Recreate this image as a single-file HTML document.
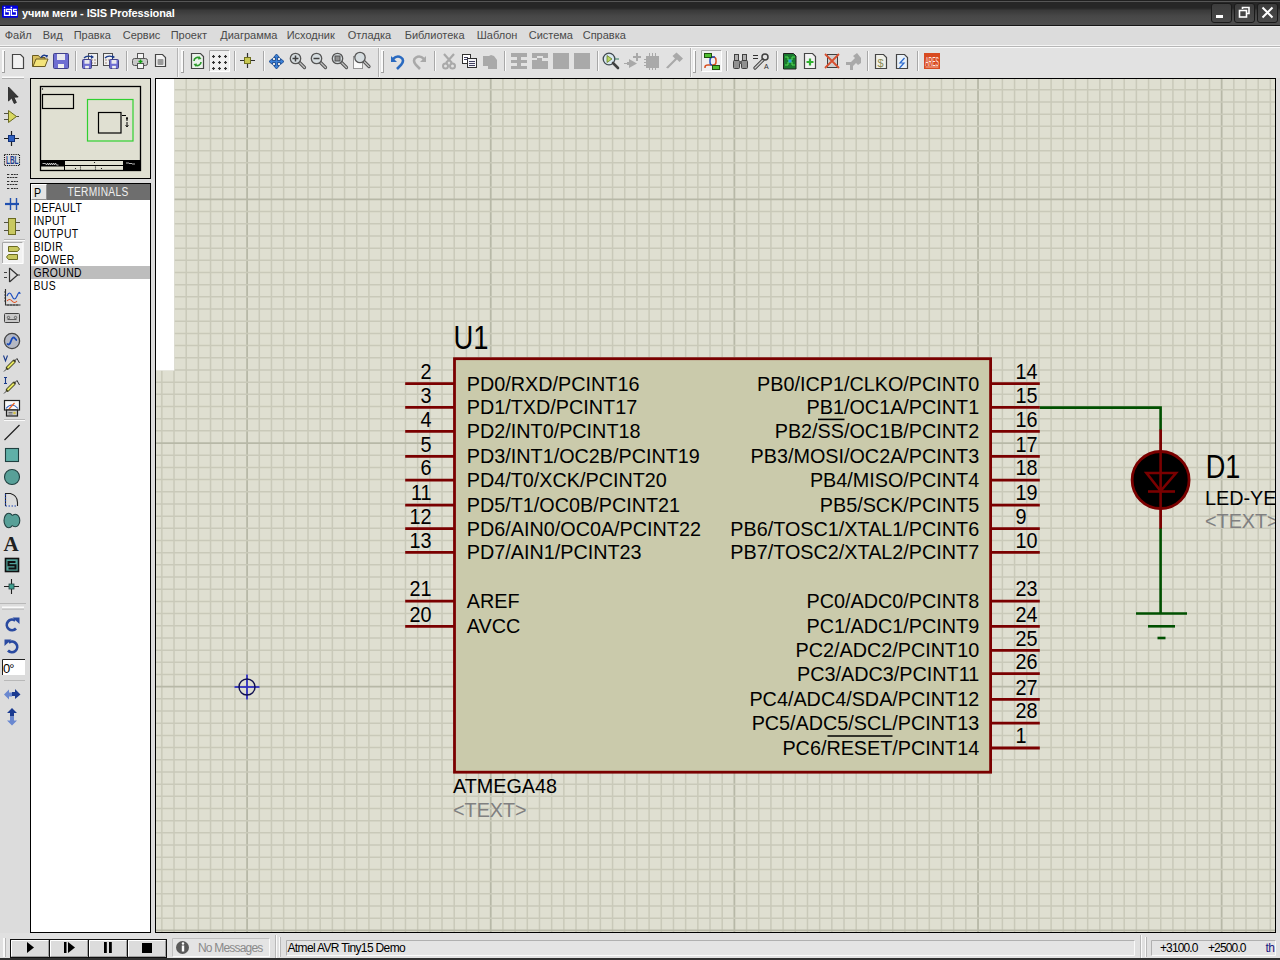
<!DOCTYPE html><html><head><meta charset="utf-8"><style>
*{margin:0;padding:0;box-sizing:border-box}
html,body{width:1280px;height:960px;overflow:hidden;background:#dcdcdc;font-family:"Liberation Sans",sans-serif}
.a{position:absolute}
svg{position:absolute;overflow:visible}
</style></head><body>

<div class="a" style="left:0;top:0;width:1280px;height:26px;background:linear-gradient(#202020 0px,#202020 1px,#262626 2px,#262626 8px,#3a3a3a 10.5px,#474747 16px,#4e4e4e 24px)"></div>
<div class="a" style="left:0;top:1px;width:1280px;height:1px;background:#565656"></div>
<div class="a" style="left:0;top:25px;width:1280px;height:1px;background:#151515"></div>
<svg style="left:0;top:0" width="20" height="22"><rect x="2" y="5.5" width="16" height="12.3" rx="1" fill="#0000e0"/><path d="M4.5 9V15.3H9.5V11.5H6.3V9.3H11.4V15.3H16.5V11.5H13.5V9.3H16.8" fill="none" stroke="#fff" stroke-width="1.3"/><rect x="3.8" y="6.8" width="1.4" height="1.4" fill="#fff"/><rect x="10.7" y="6.8" width="1.4" height="1.4" fill="#fff"/></svg>
<div class="a" style="left:22px;top:6px;height:14px;color:#fff;font:bold 11px/14px 'Liberation Sans',sans-serif;white-space:pre;letter-spacing:-0.1px">учим меги - ISIS Professional</div>
<div class="a" style="left:1211px;top:3px;width:21px;height:20px;border:1px solid #1a1a1a;border-radius:3px;background:linear-gradient(#3c3c3c,#4a4a4a)"></div>
<div class="a" style="left:1234px;top:3px;width:21px;height:20px;border:1px solid #1a1a1a;border-radius:3px;background:linear-gradient(#3c3c3c,#4a4a4a)"></div>
<div class="a" style="left:1257px;top:3px;width:21px;height:20px;border:1px solid #1a1a1a;border-radius:3px;background:linear-gradient(#3c3c3c,#4a4a4a)"></div>
<div class="a" style="left:1216px;top:15px;width:7px;height:3px;background:#fff"></div>
<svg style="left:1234px;top:0" width="22" height="26"><path d="M8.5 9V7.5H15V13.5H13" fill="none" stroke="#fff" stroke-width="1.6"/><rect x="5.5" y="10.5" width="7" height="6.5" fill="#444" stroke="#fff" stroke-width="1.6"/></svg>
<svg style="left:1257.5px;top:0" width="22" height="26"><path d="M4.5 7.5L14.5 17.5M14.5 7.5L4.5 17.5" stroke="#fff" stroke-width="2"/></svg>
<div class="a" style="left:0;top:26px;width:1280px;height:20px;background:#dcdcdc"></div>
<div class="a" style="left:0;top:26px;width:1280px;height:1px;background:#e6e6e6"></div>
<div class="a" style="left:0;top:45px;width:1280px;height:1px;background:#f4f4f4"></div>
<div class="a" style="left:0;top:46px;width:1280px;height:1px;background:#b6b6b6"></div>
<div class="a" style="left:0;top:47px;width:1280px;height:1px;background:#fafafa"></div>
<div class="a" style="left:4.7px;top:27.4px;height:16px;color:#4a4a4a;font:11px/16px 'Liberation Sans',sans-serif;white-space:pre">Файл</div>
<div class="a" style="left:42.7px;top:27.4px;height:16px;color:#4a4a4a;font:11px/16px 'Liberation Sans',sans-serif;white-space:pre">Вид</div>
<div class="a" style="left:73.7px;top:27.4px;height:16px;color:#4a4a4a;font:11px/16px 'Liberation Sans',sans-serif;white-space:pre">Правка</div>
<div class="a" style="left:122.7px;top:27.4px;height:16px;color:#4a4a4a;font:11px/16px 'Liberation Sans',sans-serif;white-space:pre">Сервис</div>
<div class="a" style="left:170.7px;top:27.4px;height:16px;color:#4a4a4a;font:11px/16px 'Liberation Sans',sans-serif;white-space:pre">Проект</div>
<div class="a" style="left:220.2px;top:27.4px;height:16px;color:#4a4a4a;font:11px/16px 'Liberation Sans',sans-serif;white-space:pre">Диаграмма</div>
<div class="a" style="left:286.7px;top:27.4px;height:16px;color:#4a4a4a;font:11px/16px 'Liberation Sans',sans-serif;white-space:pre">Исходник</div>
<div class="a" style="left:347.7px;top:27.4px;height:16px;color:#4a4a4a;font:11px/16px 'Liberation Sans',sans-serif;white-space:pre">Отладка</div>
<div class="a" style="left:404.7px;top:27.4px;height:16px;color:#4a4a4a;font:11px/16px 'Liberation Sans',sans-serif;white-space:pre">Библиотека</div>
<div class="a" style="left:476.7px;top:27.4px;height:16px;color:#4a4a4a;font:11px/16px 'Liberation Sans',sans-serif;white-space:pre">Шаблон</div>
<div class="a" style="left:528.7px;top:27.4px;height:16px;color:#4a4a4a;font:11px/16px 'Liberation Sans',sans-serif;white-space:pre">Система</div>
<div class="a" style="left:582.7px;top:27.4px;height:16px;color:#4a4a4a;font:11px/16px 'Liberation Sans',sans-serif;white-space:pre">Справка</div>
<div class="a" style="left:0;top:48px;width:1280px;height:30px;background:#e2e2e2"></div>
<svg style="left:0;top:0" width="1280" height="80"><rect x="2" y="50" width="3" height="23" fill="#fafafa"/><line x1="4.5" y1="51" x2="4.5" y2="73" stroke="#a0a0a0"/><line x1="2" y1="72.5" x2="5" y2="72.5" stroke="#a0a0a0"/><path d="M12.5 54.5H20.5L23.5 57.5V68.5H12.5Z" fill="#f2f2f2" stroke="#454545" stroke-width="1.2"/><path d="M32.5 55.5h6l1.5 2h5v9h-12.5z" fill="#d8c060" stroke="#6a5a20"/><path d="M33 66.5l3-7.5h12l-3 7.5z" fill="#f4e47a" stroke="#6a5a20"/><path d="M41 57.5q3-4 6-1" fill="none" stroke="#1a3a8a" stroke-width="1.5"/><path d="M45 55l3 0l-1 3z" fill="#1a3a8a"/><rect x="53.5" y="53.5" width="15" height="15" rx="1" fill="#6e6ed2" stroke="#40408a"/><rect x="57.0" y="54" width="8.0" height="6.0" fill="#e8e8ee"/><rect x="58.0" y="64.0" width="6.0" height="4.0" fill="#f0f0f0"/><line x1="75.5" y1="51" x2="75.5" y2="71" stroke="#a8a8a8" stroke-width="1"/><line x1="76.5" y1="51" x2="76.5" y2="71" stroke="#fafafa" stroke-width="1"/><rect x="88.5" y="53.5" width="9" height="12" fill="#eee" stroke="#505050"/><circle cx="92" cy="60" r=".8" fill="#a08070"/><circle cx="95" cy="60" r=".8" fill="#a08070"/><circle cx="92" cy="63" r=".8" fill="#a08070"/><circle cx="95" cy="63" r=".8" fill="#a08070"/><rect x="82.5" y="59.5" width="9" height="9" rx="1" fill="#6e6ed2" stroke="#40408a"/><rect x="84.5" y="60" width="5.0" height="3.75" fill="#e8e8ee"/><rect x="85.125" y="65.875" width="3.75" height="2.5" fill="#f0f0f0"/><path d="M84 58q3-3 8-1" fill="none" stroke="#1a3a8a" stroke-width="1.3"/><path d="M91 55l3 2l-3 2z" fill="#1a3a8a"/><rect x="103.5" y="53.5" width="9" height="12" fill="#eee" stroke="#505050"/><circle cx="106" cy="60" r=".8" fill="#a08070"/><circle cx="109" cy="60" r=".8" fill="#a08070"/><circle cx="106" cy="63" r=".8" fill="#a08070"/><rect x="109.5" y="59.5" width="9" height="9" rx="1" fill="#6e6ed2" stroke="#40408a"/><rect x="111.5" y="60" width="5.0" height="3.75" fill="#e8e8ee"/><rect x="112.125" y="65.875" width="3.75" height="2.5" fill="#f0f0f0"/><path d="M105 58q3-3 8-1" fill="none" stroke="#1a3a8a" stroke-width="1.3"/><path d="M112 55l3 2l-3 2z" fill="#1a3a8a"/><line x1="126.5" y1="51" x2="126.5" y2="71" stroke="#a8a8a8" stroke-width="1"/><line x1="127.5" y1="51" x2="127.5" y2="71" stroke="#fafafa" stroke-width="1"/><rect x="137.5" y="53.5" width="6" height="5" fill="#f4f4f4" stroke="#555"/><rect x="132.5" y="58.5" width="15" height="7" rx="2" fill="#c8c8c8" stroke="#555"/><rect x="137.5" y="63.5" width="6" height="5" fill="#f4f4f4" stroke="#555"/><path d="M140.5 59.5v4M138.5 61.5h4" stroke="#10a010" stroke-width="1.5"/><path d="M155.5 54.5H162.5L165.5 57.5V66.5H155.5Z" fill="#f2f2f2" stroke="#454545" stroke-width="1.2"/><rect x="157.5" y="59" width="6" height="6" rx="1" fill="#9a9a9a"/><line x1="177.5" y1="48" x2="177.5" y2="77" stroke="#b4b4b4"/><line x1="178.5" y1="48" x2="178.5" y2="77" stroke="#f4f4f4"/><rect x="181" y="50" width="3" height="23" fill="#fafafa"/><line x1="183.5" y1="51" x2="183.5" y2="73" stroke="#a0a0a0"/><line x1="181" y1="72.5" x2="184" y2="72.5" stroke="#a0a0a0"/><path d="M191.5 53.5H200.5L203.5 56.5V68.5H191.5Z" fill="#eaf2ea" stroke="#454545" stroke-width="1.2"/><path d="M194 61a3.5 3.5 0 0 1 6-2.5M201 62a3.5 3.5 0 0 1-6 2.5" fill="none" stroke="#2a9a2a" stroke-width="1.6"/><path d="M199 56l2.5 3-3.5.5z M196 67l-2.5-3 3.5-.5z" fill="#2a9a2a"/><rect x="209" y="50" width="21" height="22" fill="#f0f0f0"/><path d="M209.5 71.5V50.5H229.5" fill="none" stroke="#a8a8a8"/><path d="M229.5 50.5V71.5H209.5" fill="none" stroke="#ffffff"/><path d="M212.0 56.5h3M213.5 55.0v3" stroke="#303030" stroke-width="1.2"/><path d="M212.0 62.5h3M213.5 61.0v3" stroke="#303030" stroke-width="1.2"/><path d="M212.0 68.5h3M213.5 67.0v3" stroke="#303030" stroke-width="1.2"/><path d="M218.0 56.5h3M219.5 55.0v3" stroke="#303030" stroke-width="1.2"/><path d="M218.0 62.5h3M219.5 61.0v3" stroke="#303030" stroke-width="1.2"/><path d="M218.0 68.5h3M219.5 67.0v3" stroke="#303030" stroke-width="1.2"/><path d="M224.0 56.5h3M225.5 55.0v3" stroke="#303030" stroke-width="1.2"/><path d="M224.0 62.5h3M225.5 61.0v3" stroke="#303030" stroke-width="1.2"/><path d="M224.0 68.5h3M225.5 67.0v3" stroke="#303030" stroke-width="1.2"/><line x1="234.5" y1="51" x2="234.5" y2="71" stroke="#a8a8a8" stroke-width="1"/><line x1="235.5" y1="51" x2="235.5" y2="71" stroke="#fafafa" stroke-width="1"/><path d="M240 60.5h15M247.5 53v15" stroke="#303030" stroke-width="1.2"/><rect x="244.5" y="57.5" width="6" height="6" fill="#c8c850" stroke="#707020"/><line x1="263.5" y1="51" x2="263.5" y2="71" stroke="#a8a8a8" stroke-width="1"/><line x1="264.5" y1="51" x2="264.5" y2="71" stroke="#fafafa" stroke-width="1"/><path d="M276.5 54l3 3.5h-2v3h3v-2l3.5 3-3.5 3v-2h-3v3h2l-3 3.5-3-3.5h2v-3h-3v2l-3.5-3 3.5-3v2h3v-3h-2z" fill="#3a80d8" stroke="#1a4a90" stroke-width=".9"/><line x1="298.5" y1="61.5" x2="304.5" y2="67.5" stroke="#505050" stroke-width="3.2" stroke-linecap="round"/><line x1="298.5" y1="61.5" x2="304.5" y2="67.5" stroke="#c0c0c0" stroke-width="1.4" stroke-linecap="round"/><circle cx="295.5" cy="58.5" r="5.2" fill="#d6dde0" stroke="#555" stroke-width="1.3"/><path d="M292.5 58.5h6M295.5 55.5v6" stroke="#404040" stroke-width="1.5"/><line x1="319.5" y1="61.5" x2="325.5" y2="67.5" stroke="#505050" stroke-width="3.2" stroke-linecap="round"/><line x1="319.5" y1="61.5" x2="325.5" y2="67.5" stroke="#c0c0c0" stroke-width="1.4" stroke-linecap="round"/><circle cx="316.5" cy="58.5" r="5.2" fill="#d6dde0" stroke="#555" stroke-width="1.3"/><path d="M313.5 58.5h6" stroke="#404040" stroke-width="1.5"/><line x1="340.5" y1="61.5" x2="346.5" y2="67.5" stroke="#505050" stroke-width="3.2" stroke-linecap="round"/><line x1="340.5" y1="61.5" x2="346.5" y2="67.5" stroke="#c0c0c0" stroke-width="1.4" stroke-linecap="round"/><circle cx="337.5" cy="58.5" r="5.2" fill="#d6dde0" stroke="#555" stroke-width="1.3"/><rect x="335" y="56" width="5" height="5" fill="#909090" stroke="#505050"/><rect x="353.5" y="56.5" width="9" height="12" fill="#fafafa" stroke="#404040" stroke-dasharray="1 1"/><line x1="363" y1="60.5" x2="369" y2="66.5" stroke="#505050" stroke-width="3.2" stroke-linecap="round"/><line x1="363" y1="60.5" x2="369" y2="66.5" stroke="#c0c0c0" stroke-width="1.4" stroke-linecap="round"/><circle cx="360" cy="57.5" r="5.2" fill="#d6dde0" stroke="#555" stroke-width="1.3"/><line x1="378.5" y1="48" x2="378.5" y2="77" stroke="#b4b4b4"/><line x1="379.5" y1="48" x2="379.5" y2="77" stroke="#f4f4f4"/><rect x="381" y="50" width="3" height="23" fill="#fafafa"/><line x1="383.5" y1="51" x2="383.5" y2="73" stroke="#a0a0a0"/><line x1="381" y1="72.5" x2="384" y2="72.5" stroke="#a0a0a0"/><path d="M393 59q4-4 8-1.5t0 7.5l-4 4" fill="none" stroke="#2a6ac0" stroke-width="2.6"/><path d="M391 56v6h6z" fill="#2a6ac0"/><path d="M424 59q-4-4-8-1.5t0 7.5l4 4" fill="none" stroke="#a9a9a9" stroke-width="2.6"/><path d="M426 56v6h-6z" fill="#a9a9a9"/><line x1="434.5" y1="51" x2="434.5" y2="71" stroke="#a8a8a8" stroke-width="1"/><line x1="435.5" y1="51" x2="435.5" y2="71" stroke="#fafafa" stroke-width="1"/><path d="M444 54l8 9M454 54l-8 9" stroke="#a9a9a9" stroke-width="2.2"/><circle cx="445.5" cy="66" r="2.5" fill="none" stroke="#a9a9a9" stroke-width="2"/><circle cx="452.5" cy="66" r="2.5" fill="none" stroke="#a9a9a9" stroke-width="2"/><rect x="462.5" y="54.5" width="8" height="9" fill="#fff" stroke="#303030"/><rect x="467.5" y="58.5" width="9" height="9" fill="#f4f4f8" stroke="#303030"/><path d="M464 57.5h4M464 59.5h4M469 61.5h6M469 63.5h6M469 65.5h6" stroke="#404060" stroke-width="1"/><path d="M483 56h6l2-1 3 1 3 4v9h-9v-3h-5z" fill="#a9a9a9"/><line x1="504.5" y1="51" x2="504.5" y2="71" stroke="#a8a8a8" stroke-width="1"/><line x1="505.5" y1="51" x2="505.5" y2="71" stroke="#fafafa" stroke-width="1"/><path d="M511 53h16v4h-6v3h6v3h-6v3h6v3h-16v-3h6v-3h-6v-3h6v-3h-6z" fill="#a9a9a9"/><path d="M532 53h16v5h-5v-2h-6v2h5v3h-5v2h-5v-3h5v-2h-5z M532 61h16v8h-16z" fill="#a9a9a9"/><rect x="553" y="53" width="16" height="16" fill="#a9a9a9"/><rect x="574" y="53" width="16" height="16" fill="#a9a9a9"/><line x1="597.5" y1="51" x2="597.5" y2="71" stroke="#a8a8a8" stroke-width="1"/><line x1="598.5" y1="51" x2="598.5" y2="71" stroke="#fafafa" stroke-width="1"/><circle cx="609" cy="59" r="5.8" fill="#d8e8f0" stroke="#404850" stroke-width="1.3"/><path d="M607 55.5v7l5-3.5z" fill="#b8d860" stroke="#607020" stroke-width=".7"/><path d="M613 63l5 5" stroke="#404040" stroke-width="2.6" stroke-linecap="round"/><path d="M615 59h4" stroke="#307a60"/><path d="M624 63h3v-1h2v-3l8 4.5-8 4.5v-3h-2v-1h-3z M636 53h2v3h3v2h-3v3h-2v-3h-3v-2h3z" fill="#a9a9a9"/><path d="M646 56h13v12h-13z M649 53h1v3h-1z M652 53h1v3h-1z M655 53h1v3h-1z M644 59h2v1h-2z M644 62h2v1h-2z M644 65h2v1h-2z M649 68h1v2h-1z M652 68h1v2h-1z M655 68h1v2h-1z" fill="#a9a9a9"/><path d="M666 67.5l9-9-2.5-2.5 4-3.5 6.5 6-3.5 3.5-2.5-2.5-9 9z" fill="#a9a9a9"/><line x1="690.5" y1="48" x2="690.5" y2="77" stroke="#b4b4b4"/><line x1="691.5" y1="48" x2="691.5" y2="77" stroke="#f4f4f4"/><rect x="693" y="50" width="3" height="23" fill="#fafafa"/><line x1="695.5" y1="51" x2="695.5" y2="73" stroke="#a0a0a0"/><line x1="693" y1="72.5" x2="696" y2="72.5" stroke="#a0a0a0"/><rect x="701" y="50" width="21" height="22" fill="#f0f0f0"/><path d="M701.5 71.5V50.5H721.5" fill="none" stroke="#a8a8a8"/><path d="M721.5 50.5V71.5H701.5" fill="none" stroke="#ffffff"/><path d="M710 57h3q3 0 3 3v2q0 3-3 3h-5q-3 0-3 2v1" fill="none" stroke="#d85020" stroke-width="1.5"/><path d="M708 57v-1M712 65q-2 0-2-3v-2q0-3 3-3h2" fill="none" stroke="#2050c0" stroke-width="1.5"/><rect x="704.5" y="53.5" width="7" height="4" fill="#50c030" stroke="#205010"/><rect x="712.5" y="65.5" width="7" height="4" fill="#50c030" stroke="#205010"/><line x1="726.5" y1="51" x2="726.5" y2="71" stroke="#a8a8a8" stroke-width="1"/><line x1="727.5" y1="51" x2="727.5" y2="71" stroke="#fafafa" stroke-width="1"/><rect x="733.5" y="60.5" width="6" height="8" rx="1" fill="#909090" stroke="#404040"/><rect x="741.5" y="60.5" width="6" height="8" rx="1" fill="#909090" stroke="#404040"/><rect x="734.5" y="54.5" width="4" height="6" fill="#b0b0b0" stroke="#404040"/><rect x="742.5" y="54.5" width="4" height="6" fill="#b0b0b0" stroke="#404040"/><rect x="739" y="61" width="3" height="3" fill="#606060"/><path d="M753 55.5h5M753 58.5h5" stroke="#303030" stroke-width="1.2"/><path d="M755 68l8-8" stroke="#404040" stroke-width="3.2" stroke-linecap="round"/><path d="M755 68l8-8" stroke="#d0d0d0" stroke-width="1.4" stroke-linecap="round"/><circle cx="765" cy="57" r="3" fill="none" stroke="#404040" stroke-width="1.5"/><text x="764" y="69" font-family="Liberation Sans" font-size="7" fill="#303030">A</text><line x1="776.5" y1="51" x2="776.5" y2="71" stroke="#a8a8a8" stroke-width="1"/><line x1="777.5" y1="51" x2="777.5" y2="71" stroke="#fafafa" stroke-width="1"/><path d="M783.5 53.5h10l2.5 2.5v13h-12.5z" fill="#1a7a30" stroke="#202020"/><path d="M785 57h3v3h4v-3h3M785 65h3v-3h4v3h3" fill="none" stroke="#50e050" stroke-width="1"/><rect x="788.5" y="59.5" width="3" height="3" fill="#30a0e0"/><path d="M804.5 53.5H812.5L815.5 56.5V68.5H804.5Z" fill="#f2f2f2" stroke="#454545" stroke-width="1.2"/><path d="M806.5 62h7M810 58.5v7" stroke="#30b030" stroke-width="2.2"/><rect x="827.5" y="54.5" width="10" height="13" fill="#d0d0d0" stroke="#404040"/><path d="M825 54l14 14M839 54l-14 14" stroke="#d85030" stroke-width="1.8"/><path d="M846 62h5l4-4-2-2 4-3 4 5v5l-3 2-2-2-3 3v4h-3v-5h-4z" fill="#a9a9a9"/><line x1="867.5" y1="51" x2="867.5" y2="71" stroke="#a8a8a8" stroke-width="1"/><line x1="868.5" y1="51" x2="868.5" y2="71" stroke="#fafafa" stroke-width="1"/><path d="M875.5 54.5H883.5L886.5 57.5V68.5H875.5Z" fill="#f0f0e8" stroke="#454545" stroke-width="1.2"/><text x="877.5" y="66.5" font-family="Liberation Sans" font-size="11" fill="#8a8a50">$</text><path d="M896.5 54.5H904.5L907.5 57.5V68.5H896.5Z" fill="#e8f0f8" stroke="#454545" stroke-width="1.2"/><path d="M904.5 58l-4.5 5h4l-4.5 5" fill="none" stroke="#2a6ad0" stroke-width="1.2"/><line x1="917.5" y1="51" x2="917.5" y2="71" stroke="#a8a8a8" stroke-width="1"/><line x1="918.5" y1="51" x2="918.5" y2="71" stroke="#fafafa" stroke-width="1"/><rect x="924" y="53" width="16" height="16" fill="#d84a20"/><text transform="translate(925.2,65.5) scale(1,1.45)" font-family="Liberation Sans" font-size="9" fill="#ffe8e0" textLength="13.8" lengthAdjust="spacingAndGlyphs">ARES</text><path d="M925.5 67h13" stroke="#ffd8c8" stroke-width=".8"/></svg>
<div class="a" style="left:0;top:78px;width:28px;height:855px;background:#dcdcdc"></div>
<svg style="left:0;top:0" width="28" height="940"><rect x="2" y="76.5" width="22" height="2" fill="#fafafa"/><line x1="2" y1="78.5" x2="24" y2="78.5" stroke="#b0b0b0"/><path d="M8.5 87v14l3.2-3 2.5 5.5 2.2-1-2.5-5.3 4.3-.2z" fill="#383838" stroke="#202020" stroke-width=".8"/><path d="M4 113.5h4.5M4 119.5h4.5M15 116.5h4" stroke="#505040" stroke-width="1.1"/><path d="M8.5 110.5v12l8-6z" fill="#d8d860" stroke="#6a6a20"/><path d="M4 138.5h15M11.5 131v15" stroke="#202020" stroke-width="1.2"/><rect x="8.5" y="135.5" width="6" height="6" fill="#3060c0" stroke="#10307a"/><rect x="4.5" y="154.5" width="15" height="11" fill="none" stroke="#101010" stroke-width="1.1" stroke-dasharray="1.2 1"/><text x="6" y="164" font-family="Liberation Sans" font-weight="bold" font-size="10" fill="#1a3a8a" textLength="12.5" lengthAdjust="spacingAndGlyphs">LBL</text><path d="M7 174.5h3M11 174.5h7M7 177.5h11M7 181.5h3M11 181.5h7M7 184.5h11M7 188.5h3M11 188.5h7" stroke="#303030" stroke-width="1.1" stroke-dasharray="2 .7"/><path d="M5 204h14" stroke="#2050b0" stroke-width="2.2"/><path d="M10.5 198v12M16.5 198v12" stroke="#2050b0" stroke-width="1.4"/><path d="M4 222.5h4M4 230.5h4M15 222.5h5M15 230.5h5" stroke="#505040" stroke-width="1.1"/><rect x="8.5" y="218.5" width="7" height="16" fill="#c8c860" stroke="#6a6a20"/><line x1="4" y1="239.5" x2="25" y2="239.5" stroke="#b8b8b8"/><line x1="4" y1="240.5" x2="25" y2="240.5" stroke="#fafafa"/><rect x="2" y="242" width="21.5" height="22" fill="#f2f2f2"/><path d="M2.5 263V242.5H22.5" fill="none" stroke="#a8a8a8"/><path d="M23 242.5V263.5H2.5" fill="none" stroke="#ffffff"/><path d="M8.5 246.5h9l2 2.5-2 2.5h-9z" fill="#c8c860" stroke="#6a6a20"/><path d="M17.5 254.5h-9l-2 2.5 2 2.5h9z" fill="#c8c860" stroke="#6a6a20"/><path d="M4 272.5h3M4 277.5h3M17 275h3" stroke="#404040" stroke-width="1.1"/><path d="M9.5 268v14M9.5 268l8 7-8 7" fill="none" stroke="#303030" stroke-width="1.2"/><path d="M5.5 289v16h15" fill="none" stroke="#303030" stroke-width="1.1"/><path d="M4 292h2M4 295h2M4 298h2M4 301h2M8 304v2M11 304v2M14 304v2M17 304v2" stroke="#303030" stroke-width=".8"/><path d="M7 296q2.5-6 5 0t5 0 3-2" fill="none" stroke="#2050c0" stroke-width="1.2"/><path d="M7 301q2.5-3 5 0t5 0" fill="none" stroke="#e05020" stroke-width="1.1"/><rect x="4.5" y="313.5" width="15" height="9" rx="1" fill="#c8c8c8" stroke="#404040"/><path d="M7.5 319.5h9" stroke="#404040" stroke-width=".8"/><circle cx="8.5" cy="317.5" r="1.2" fill="none" stroke="#404040" stroke-width=".7"/><circle cx="15.5" cy="317.5" r="1.2" fill="none" stroke="#404040" stroke-width=".7"/><circle cx="12" cy="341" r="7.6" fill="#b4b8c4" stroke="#454545" stroke-width="1.3"/><path d="M7 343.5c1.5 2 3 1 4-2.5s2.5-4.5 4-2.5 1.5 1.5 2 1.5" fill="none" stroke="#1a4ab8" stroke-width="1.8"/><path d="M3.5 355.5l2 5.5 2-5.5" fill="none" stroke="#1a3a8a" stroke-width="1.1"/><path d="M4 371.5l3.5-3.5" stroke="#404040"/><path d="M7.5 368l6.5-6.5" stroke="#404020" stroke-width="3.6" stroke-linecap="round"/><path d="M7.5 368l6.5-6.5" stroke="#e8e860" stroke-width="1.8"/><path d="M14 361.5l3-3 2.5 4.5" fill="none" stroke="#303030" stroke-width="1"/><path d="M4 377.5h3M5.5 377.5v6M4 383.5h3" fill="none" stroke="#1a3a8a" stroke-width="1.1"/><path d="M4 393.5l3.5-3.5" stroke="#404040"/><path d="M7.5 390l6.5-6.5" stroke="#404020" stroke-width="3.6" stroke-linecap="round"/><path d="M7.5 390l6.5-6.5" stroke="#e8e860" stroke-width="1.8"/><path d="M14 383.5l3-3 2.5 4.5" fill="none" stroke="#303030" stroke-width="1"/><rect x="4.5" y="400.5" width="15" height="9.5" fill="#f8f8f8" stroke="#202020" stroke-width="1.2"/><path d="M6 408.5q6-7 12 0" fill="none" stroke="#3060c0" stroke-width="1.1"/><path d="M9 409l5.5-6" stroke="#e86020" stroke-width="1.2"/><rect x="6.5" y="410" width="11" height="6" fill="#c8c8c8" stroke="#202020" stroke-width="1.2"/><path d="M8.5 412.5h4M8.5 414h4" stroke="#505050" stroke-width=".7"/><circle cx="14.5" cy="413" r="1.3" fill="#d0c040"/><line x1="4" y1="419.5" x2="25" y2="419.5" stroke="#b8b8b8"/><line x1="4" y1="420.5" x2="25" y2="420.5" stroke="#fafafa"/><path d="M4.5 440l15-15" stroke="#202020" stroke-width="1.3"/><rect x="5.5" y="448.5" width="13" height="13" fill="#60b0a8" stroke="#204040" stroke-width="1.1"/><circle cx="12" cy="477" r="7.5" fill="#58a098" stroke="#204040" stroke-width="1.1"/><path d="M5.5 506v-12.5h5q7 2 7 9v3.5" fill="none" stroke="#202020" stroke-width="1.1"/><path d="M5.5 494v12h11" fill="none" stroke="#1a40b0" stroke-width="1.1" stroke-dasharray="1.5 1.5"/><ellipse cx="8.8" cy="520.5" rx="4.8" ry="7.2" fill="#58a098" stroke="#204040" stroke-width="1.1"/><ellipse cx="15.2" cy="520.5" rx="4.6" ry="6.3" fill="#58a098" stroke="#204040" stroke-width="1.1"/><ellipse cx="11.8" cy="520.5" rx="2" ry="5" fill="#58a098"/><text x="3.5" y="550.5" font-family="Liberation Serif" font-weight="bold" font-size="21" fill="#202020">A</text><rect x="5.5" y="558.5" width="13" height="13" fill="#50a098" stroke="#101010" stroke-width="1.6"/><path d="M15.5 562h-7v3.2h7v3.3h-7" fill="none" stroke="#101010" stroke-width="2"/><path d="M4 586.5h15M11.5 579v15" stroke="#202020" stroke-width="1.1"/><rect x="9" y="584" width="5" height="5" fill="#40a090" stroke="#204040" stroke-width=".8"/><line x1="0" y1="603.5" x2="26" y2="603.5" stroke="#b8b8b8"/><rect x="2" y="606.5" width="22" height="2.5" fill="#fafafa"/><line x1="2" y1="609" x2="24" y2="609" stroke="#b0b0b0"/><path d="M15.2 620.6A5.3 5.3 0 1 0 16 628.5" fill="none" stroke="#2a4aa0" stroke-width="2.7"/><path d="M12.5 617.5h7v6.5z" fill="#2a4aa0"/><path d="M8.8 642.6A5.3 5.3 0 1 1 8 650.5" fill="none" stroke="#2a4aa0" stroke-width="2.7"/><path d="M11.5 639.5h-7v6.5z" fill="#2a4aa0"/><rect x="2" y="659" width="23" height="16" fill="#ffffff"/><path d="M2.5 675V659.5H25" fill="none" stroke="#202020" stroke-width="1"/><text x="3" y="673" font-family="Liberation Sans" font-size="13" fill="#000" letter-spacing="-1">0°</text><line x1="4" y1="680.5" x2="25" y2="680.5" stroke="#b8b8b8"/><path d="M4 694.5l5-5v3h3v4h-3v3z" fill="#6a88d0"/><path d="M20.5 694.5l-5.5-5.5v3h-3v4h3v3z" fill="#1a3a90"/><path d="M12 708l-5 5h3v3.5h4v-3.5h3z" fill="#1a3a90"/><path d="M12 725.5l-5-5h3v-4h4v4h3z" fill="#6a88d0"/></svg>
<div class="a" style="left:30px;top:78px;width:121px;height:101px;border:1px solid #000;background:#e0e0d2"></div>
<svg style="left:0;top:0" width="160" height="180">
<rect x="40.5" y="86.5" width="100" height="84" fill="none" stroke="#000" stroke-width="1.3"/>
<rect x="42.5" y="94.5" width="31" height="14" fill="none" stroke="#000" stroke-width="1.2"/>
<rect x="87.5" y="99.5" width="45.5" height="41.5" fill="none" stroke="#30d030" stroke-width="1.2"/>
<rect x="98.5" y="112.5" width="22.5" height="20.5" fill="none" stroke="#000" stroke-width="1.2"/>
<path d="M122 115.5h4M127 117v4M127 122v5" stroke="#000" stroke-width="1"/><circle cx="127" cy="118.5" r=".9"/><path d="M125.5 125l1.5 2 1.5-2" fill="none" stroke="#000" stroke-width=".8"/>
<circle cx="42.5" cy="89" r=".7" fill="#000"/>
<path d="M41 160.5h99M64.5 160v10M123.5 160v10M64 165.5h60" stroke="#000" stroke-width="1"/>
<rect x="41" y="160.5" width="23.5" height="6" fill="#000"/><rect x="123.5" y="160.5" width="17" height="10" fill="#000"/>
<path d="M42.5 163.5h3l1 1.5 1-2 1 2 1-2 1 2 1-2 1 2 1-2 1 2 1-2 1 2h2M126 163h3l1 1 1-1 1 1h3" stroke="#fff" stroke-width=".7" fill="none"/>
<circle cx="94.5" cy="162.5" r=".6" fill="#000"/><circle cx="75.5" cy="168.5" r=".6" fill="#000"/><circle cx="80.5" cy="167" r=".6" fill="#000"/><circle cx="80.5" cy="169" r=".6" fill="#000"/><circle cx="95.5" cy="167" r=".6" fill="#000"/><circle cx="95.5" cy="169" r=".6" fill="#000"/><circle cx="101.5" cy="168.5" r=".6" fill="#000"/>
</svg>
<div class="a" style="left:30px;top:183px;width:121px;height:750px;border:1px solid #000;background:#fff"></div>
<div class="a" style="left:31px;top:184px;width:119px;height:16px;background:#6e6e6e"></div>
<div class="a" style="left:31px;top:184px;width:16px;height:16px;background:#e4e4e4;border-top:1px solid #fff;border-left:1px solid #fff;border-right:1px solid #909090;border-bottom:1px solid #909090"></div>
<div class="a" style="left:34px;top:186.4px;color:#000;font:10.6px/10px 'Liberation Sans',sans-serif;transform:scale(1,1.2);transform-origin:0 0">P</div>
<div class="a" style="left:67.5px;top:186.4px;color:#f0f0f0;font:10.2px/10px 'Liberation Sans',sans-serif;letter-spacing:0.3px;transform:scale(1,1.2);transform-origin:0 0;white-space:pre">TERMINALS</div>
<div class="a" style="left:31px;top:266px;width:119px;height:13px;background:#bdbdbd"></div>
<div class="a" style="left:33.5px;top:202px;color:#000;font:10.4px/10px 'Liberation Sans',sans-serif;letter-spacing:0.38px;transform:scale(1,1.24);transform-origin:0 0;white-space:pre">DEFAULT</div>
<div class="a" style="left:33.5px;top:215px;color:#000;font:10.4px/10px 'Liberation Sans',sans-serif;letter-spacing:0.38px;transform:scale(1,1.24);transform-origin:0 0;white-space:pre">INPUT</div>
<div class="a" style="left:33.5px;top:228px;color:#000;font:10.4px/10px 'Liberation Sans',sans-serif;letter-spacing:0.38px;transform:scale(1,1.24);transform-origin:0 0;white-space:pre">OUTPUT</div>
<div class="a" style="left:33.5px;top:241px;color:#000;font:10.4px/10px 'Liberation Sans',sans-serif;letter-spacing:0.38px;transform:scale(1,1.24);transform-origin:0 0;white-space:pre">BIDIR</div>
<div class="a" style="left:33.5px;top:254px;color:#000;font:10.4px/10px 'Liberation Sans',sans-serif;letter-spacing:0.38px;transform:scale(1,1.24);transform-origin:0 0;white-space:pre">POWER</div>
<div class="a" style="left:33.5px;top:267px;color:#000;font:10.4px/10px 'Liberation Sans',sans-serif;letter-spacing:0.38px;transform:scale(1,1.24);transform-origin:0 0;white-space:pre">GROUND</div>
<div class="a" style="left:33.5px;top:280px;color:#000;font:10.4px/10px 'Liberation Sans',sans-serif;letter-spacing:0.38px;transform:scale(1,1.24);transform-origin:0 0;white-space:pre">BUS</div>
<div class="a" style="left:155px;top:78px;width:1121px;height:855px;border:1px solid #000;background:#dfdfd1;overflow:hidden">
<svg style="left:-156px;top:-79px" width="1280" height="960" viewBox="0 0 1280 960">
<line x1="161.83" y1="79" x2="161.83" y2="933" stroke="#c9c9b9" stroke-width="1.5"/><line x1="174.01" y1="79" x2="174.01" y2="933" stroke="#c9c9b9" stroke-width="1.5"/><line x1="186.19" y1="79" x2="186.19" y2="933" stroke="#c9c9b9" stroke-width="1.5"/><line x1="198.37" y1="79" x2="198.37" y2="933" stroke="#c9c9b9" stroke-width="1.5"/><line x1="210.55" y1="79" x2="210.55" y2="933" stroke="#c9c9b9" stroke-width="1.5"/><line x1="222.74" y1="79" x2="222.74" y2="933" stroke="#c9c9b9" stroke-width="1.5"/><line x1="234.92" y1="79" x2="234.92" y2="933" stroke="#c9c9b9" stroke-width="1.5"/><line x1="247.10" y1="79" x2="247.10" y2="933" stroke="#b7b8a7" stroke-width="1.8"/><line x1="259.28" y1="79" x2="259.28" y2="933" stroke="#c9c9b9" stroke-width="1.5"/><line x1="271.46" y1="79" x2="271.46" y2="933" stroke="#c9c9b9" stroke-width="1.5"/><line x1="283.65" y1="79" x2="283.65" y2="933" stroke="#c9c9b9" stroke-width="1.5"/><line x1="295.83" y1="79" x2="295.83" y2="933" stroke="#c9c9b9" stroke-width="1.5"/><line x1="308.01" y1="79" x2="308.01" y2="933" stroke="#c9c9b9" stroke-width="1.5"/><line x1="320.19" y1="79" x2="320.19" y2="933" stroke="#c9c9b9" stroke-width="1.5"/><line x1="332.37" y1="79" x2="332.37" y2="933" stroke="#c9c9b9" stroke-width="1.5"/><line x1="344.56" y1="79" x2="344.56" y2="933" stroke="#c9c9b9" stroke-width="1.5"/><line x1="356.74" y1="79" x2="356.74" y2="933" stroke="#c9c9b9" stroke-width="1.5"/><line x1="368.92" y1="79" x2="368.92" y2="933" stroke="#c9c9b9" stroke-width="1.5"/><line x1="381.10" y1="79" x2="381.10" y2="933" stroke="#c9c9b9" stroke-width="1.5"/><line x1="393.28" y1="79" x2="393.28" y2="933" stroke="#c9c9b9" stroke-width="1.5"/><line x1="405.47" y1="79" x2="405.47" y2="933" stroke="#c9c9b9" stroke-width="1.5"/><line x1="417.65" y1="79" x2="417.65" y2="933" stroke="#c9c9b9" stroke-width="1.5"/><line x1="429.83" y1="79" x2="429.83" y2="933" stroke="#c9c9b9" stroke-width="1.5"/><line x1="442.01" y1="79" x2="442.01" y2="933" stroke="#c9c9b9" stroke-width="1.5"/><line x1="454.19" y1="79" x2="454.19" y2="933" stroke="#c9c9b9" stroke-width="1.5"/><line x1="466.38" y1="79" x2="466.38" y2="933" stroke="#c9c9b9" stroke-width="1.5"/><line x1="478.56" y1="79" x2="478.56" y2="933" stroke="#c9c9b9" stroke-width="1.5"/><line x1="490.74" y1="79" x2="490.74" y2="933" stroke="#b7b8a7" stroke-width="1.8"/><line x1="502.92" y1="79" x2="502.92" y2="933" stroke="#c9c9b9" stroke-width="1.5"/><line x1="515.10" y1="79" x2="515.10" y2="933" stroke="#c9c9b9" stroke-width="1.5"/><line x1="527.29" y1="79" x2="527.29" y2="933" stroke="#c9c9b9" stroke-width="1.5"/><line x1="539.47" y1="79" x2="539.47" y2="933" stroke="#c9c9b9" stroke-width="1.5"/><line x1="551.65" y1="79" x2="551.65" y2="933" stroke="#c9c9b9" stroke-width="1.5"/><line x1="563.83" y1="79" x2="563.83" y2="933" stroke="#c9c9b9" stroke-width="1.5"/><line x1="576.01" y1="79" x2="576.01" y2="933" stroke="#c9c9b9" stroke-width="1.5"/><line x1="588.20" y1="79" x2="588.20" y2="933" stroke="#c9c9b9" stroke-width="1.5"/><line x1="600.38" y1="79" x2="600.38" y2="933" stroke="#c9c9b9" stroke-width="1.5"/><line x1="612.56" y1="79" x2="612.56" y2="933" stroke="#c9c9b9" stroke-width="1.5"/><line x1="624.74" y1="79" x2="624.74" y2="933" stroke="#c9c9b9" stroke-width="1.5"/><line x1="636.92" y1="79" x2="636.92" y2="933" stroke="#c9c9b9" stroke-width="1.5"/><line x1="649.11" y1="79" x2="649.11" y2="933" stroke="#c9c9b9" stroke-width="1.5"/><line x1="661.29" y1="79" x2="661.29" y2="933" stroke="#c9c9b9" stroke-width="1.5"/><line x1="673.47" y1="79" x2="673.47" y2="933" stroke="#c9c9b9" stroke-width="1.5"/><line x1="685.65" y1="79" x2="685.65" y2="933" stroke="#c9c9b9" stroke-width="1.5"/><line x1="697.83" y1="79" x2="697.83" y2="933" stroke="#c9c9b9" stroke-width="1.5"/><line x1="710.02" y1="79" x2="710.02" y2="933" stroke="#c9c9b9" stroke-width="1.5"/><line x1="722.20" y1="79" x2="722.20" y2="933" stroke="#c9c9b9" stroke-width="1.5"/><line x1="734.38" y1="79" x2="734.38" y2="933" stroke="#b7b8a7" stroke-width="1.8"/><line x1="746.56" y1="79" x2="746.56" y2="933" stroke="#c9c9b9" stroke-width="1.5"/><line x1="758.74" y1="79" x2="758.74" y2="933" stroke="#c9c9b9" stroke-width="1.5"/><line x1="770.93" y1="79" x2="770.93" y2="933" stroke="#c9c9b9" stroke-width="1.5"/><line x1="783.11" y1="79" x2="783.11" y2="933" stroke="#c9c9b9" stroke-width="1.5"/><line x1="795.29" y1="79" x2="795.29" y2="933" stroke="#c9c9b9" stroke-width="1.5"/><line x1="807.47" y1="79" x2="807.47" y2="933" stroke="#c9c9b9" stroke-width="1.5"/><line x1="819.65" y1="79" x2="819.65" y2="933" stroke="#c9c9b9" stroke-width="1.5"/><line x1="831.84" y1="79" x2="831.84" y2="933" stroke="#c9c9b9" stroke-width="1.5"/><line x1="844.02" y1="79" x2="844.02" y2="933" stroke="#c9c9b9" stroke-width="1.5"/><line x1="856.20" y1="79" x2="856.20" y2="933" stroke="#c9c9b9" stroke-width="1.5"/><line x1="868.38" y1="79" x2="868.38" y2="933" stroke="#c9c9b9" stroke-width="1.5"/><line x1="880.56" y1="79" x2="880.56" y2="933" stroke="#c9c9b9" stroke-width="1.5"/><line x1="892.75" y1="79" x2="892.75" y2="933" stroke="#c9c9b9" stroke-width="1.5"/><line x1="904.93" y1="79" x2="904.93" y2="933" stroke="#c9c9b9" stroke-width="1.5"/><line x1="917.11" y1="79" x2="917.11" y2="933" stroke="#c9c9b9" stroke-width="1.5"/><line x1="929.29" y1="79" x2="929.29" y2="933" stroke="#c9c9b9" stroke-width="1.5"/><line x1="941.47" y1="79" x2="941.47" y2="933" stroke="#c9c9b9" stroke-width="1.5"/><line x1="953.66" y1="79" x2="953.66" y2="933" stroke="#c9c9b9" stroke-width="1.5"/><line x1="965.84" y1="79" x2="965.84" y2="933" stroke="#c9c9b9" stroke-width="1.5"/><line x1="978.02" y1="79" x2="978.02" y2="933" stroke="#b7b8a7" stroke-width="1.8"/><line x1="990.20" y1="79" x2="990.20" y2="933" stroke="#c9c9b9" stroke-width="1.5"/><line x1="1002.38" y1="79" x2="1002.38" y2="933" stroke="#c9c9b9" stroke-width="1.5"/><line x1="1014.57" y1="79" x2="1014.57" y2="933" stroke="#c9c9b9" stroke-width="1.5"/><line x1="1026.75" y1="79" x2="1026.75" y2="933" stroke="#c9c9b9" stroke-width="1.5"/><line x1="1038.93" y1="79" x2="1038.93" y2="933" stroke="#c9c9b9" stroke-width="1.5"/><line x1="1051.11" y1="79" x2="1051.11" y2="933" stroke="#c9c9b9" stroke-width="1.5"/><line x1="1063.29" y1="79" x2="1063.29" y2="933" stroke="#c9c9b9" stroke-width="1.5"/><line x1="1075.48" y1="79" x2="1075.48" y2="933" stroke="#c9c9b9" stroke-width="1.5"/><line x1="1087.66" y1="79" x2="1087.66" y2="933" stroke="#c9c9b9" stroke-width="1.5"/><line x1="1099.84" y1="79" x2="1099.84" y2="933" stroke="#c9c9b9" stroke-width="1.5"/><line x1="1112.02" y1="79" x2="1112.02" y2="933" stroke="#c9c9b9" stroke-width="1.5"/><line x1="1124.20" y1="79" x2="1124.20" y2="933" stroke="#c9c9b9" stroke-width="1.5"/><line x1="1136.39" y1="79" x2="1136.39" y2="933" stroke="#c9c9b9" stroke-width="1.5"/><line x1="1148.57" y1="79" x2="1148.57" y2="933" stroke="#c9c9b9" stroke-width="1.5"/><line x1="1160.75" y1="79" x2="1160.75" y2="933" stroke="#c9c9b9" stroke-width="1.5"/><line x1="1172.93" y1="79" x2="1172.93" y2="933" stroke="#c9c9b9" stroke-width="1.5"/><line x1="1185.11" y1="79" x2="1185.11" y2="933" stroke="#c9c9b9" stroke-width="1.5"/><line x1="1197.30" y1="79" x2="1197.30" y2="933" stroke="#c9c9b9" stroke-width="1.5"/><line x1="1209.48" y1="79" x2="1209.48" y2="933" stroke="#c9c9b9" stroke-width="1.5"/><line x1="1221.66" y1="79" x2="1221.66" y2="933" stroke="#b7b8a7" stroke-width="1.8"/><line x1="1233.84" y1="79" x2="1233.84" y2="933" stroke="#c9c9b9" stroke-width="1.5"/><line x1="1246.02" y1="79" x2="1246.02" y2="933" stroke="#c9c9b9" stroke-width="1.5"/><line x1="1258.21" y1="79" x2="1258.21" y2="933" stroke="#c9c9b9" stroke-width="1.5"/><line x1="1270.39" y1="79" x2="1270.39" y2="933" stroke="#c9c9b9" stroke-width="1.5"/><line x1="156" y1="89.76" x2="1280" y2="89.76" stroke="#c9c9b9" stroke-width="1.5"/><line x1="156" y1="101.94" x2="1280" y2="101.94" stroke="#c9c9b9" stroke-width="1.5"/><line x1="156" y1="114.13" x2="1280" y2="114.13" stroke="#c9c9b9" stroke-width="1.5"/><line x1="156" y1="126.31" x2="1280" y2="126.31" stroke="#c9c9b9" stroke-width="1.5"/><line x1="156" y1="138.49" x2="1280" y2="138.49" stroke="#c9c9b9" stroke-width="1.5"/><line x1="156" y1="150.67" x2="1280" y2="150.67" stroke="#c9c9b9" stroke-width="1.5"/><line x1="156" y1="162.85" x2="1280" y2="162.85" stroke="#c9c9b9" stroke-width="1.5"/><line x1="156" y1="175.04" x2="1280" y2="175.04" stroke="#c9c9b9" stroke-width="1.5"/><line x1="156" y1="187.22" x2="1280" y2="187.22" stroke="#c9c9b9" stroke-width="1.5"/><line x1="156" y1="199.40" x2="1280" y2="199.40" stroke="#b7b8a7" stroke-width="1.8"/><line x1="156" y1="211.58" x2="1280" y2="211.58" stroke="#c9c9b9" stroke-width="1.5"/><line x1="156" y1="223.76" x2="1280" y2="223.76" stroke="#c9c9b9" stroke-width="1.5"/><line x1="156" y1="235.95" x2="1280" y2="235.95" stroke="#c9c9b9" stroke-width="1.5"/><line x1="156" y1="248.13" x2="1280" y2="248.13" stroke="#c9c9b9" stroke-width="1.5"/><line x1="156" y1="260.31" x2="1280" y2="260.31" stroke="#c9c9b9" stroke-width="1.5"/><line x1="156" y1="272.49" x2="1280" y2="272.49" stroke="#c9c9b9" stroke-width="1.5"/><line x1="156" y1="284.67" x2="1280" y2="284.67" stroke="#c9c9b9" stroke-width="1.5"/><line x1="156" y1="296.86" x2="1280" y2="296.86" stroke="#c9c9b9" stroke-width="1.5"/><line x1="156" y1="309.04" x2="1280" y2="309.04" stroke="#c9c9b9" stroke-width="1.5"/><line x1="156" y1="321.22" x2="1280" y2="321.22" stroke="#c9c9b9" stroke-width="1.5"/><line x1="156" y1="333.40" x2="1280" y2="333.40" stroke="#c9c9b9" stroke-width="1.5"/><line x1="156" y1="345.58" x2="1280" y2="345.58" stroke="#c9c9b9" stroke-width="1.5"/><line x1="156" y1="357.77" x2="1280" y2="357.77" stroke="#c9c9b9" stroke-width="1.5"/><line x1="156" y1="369.95" x2="1280" y2="369.95" stroke="#c9c9b9" stroke-width="1.5"/><line x1="156" y1="382.13" x2="1280" y2="382.13" stroke="#c9c9b9" stroke-width="1.5"/><line x1="156" y1="394.31" x2="1280" y2="394.31" stroke="#c9c9b9" stroke-width="1.5"/><line x1="156" y1="406.49" x2="1280" y2="406.49" stroke="#c9c9b9" stroke-width="1.5"/><line x1="156" y1="418.68" x2="1280" y2="418.68" stroke="#c9c9b9" stroke-width="1.5"/><line x1="156" y1="430.86" x2="1280" y2="430.86" stroke="#c9c9b9" stroke-width="1.5"/><line x1="156" y1="443.04" x2="1280" y2="443.04" stroke="#b7b8a7" stroke-width="1.8"/><line x1="156" y1="455.22" x2="1280" y2="455.22" stroke="#c9c9b9" stroke-width="1.5"/><line x1="156" y1="467.40" x2="1280" y2="467.40" stroke="#c9c9b9" stroke-width="1.5"/><line x1="156" y1="479.59" x2="1280" y2="479.59" stroke="#c9c9b9" stroke-width="1.5"/><line x1="156" y1="491.77" x2="1280" y2="491.77" stroke="#c9c9b9" stroke-width="1.5"/><line x1="156" y1="503.95" x2="1280" y2="503.95" stroke="#c9c9b9" stroke-width="1.5"/><line x1="156" y1="516.13" x2="1280" y2="516.13" stroke="#c9c9b9" stroke-width="1.5"/><line x1="156" y1="528.31" x2="1280" y2="528.31" stroke="#c9c9b9" stroke-width="1.5"/><line x1="156" y1="540.50" x2="1280" y2="540.50" stroke="#c9c9b9" stroke-width="1.5"/><line x1="156" y1="552.68" x2="1280" y2="552.68" stroke="#c9c9b9" stroke-width="1.5"/><line x1="156" y1="564.86" x2="1280" y2="564.86" stroke="#c9c9b9" stroke-width="1.5"/><line x1="156" y1="577.04" x2="1280" y2="577.04" stroke="#c9c9b9" stroke-width="1.5"/><line x1="156" y1="589.22" x2="1280" y2="589.22" stroke="#c9c9b9" stroke-width="1.5"/><line x1="156" y1="601.41" x2="1280" y2="601.41" stroke="#c9c9b9" stroke-width="1.5"/><line x1="156" y1="613.59" x2="1280" y2="613.59" stroke="#c9c9b9" stroke-width="1.5"/><line x1="156" y1="625.77" x2="1280" y2="625.77" stroke="#c9c9b9" stroke-width="1.5"/><line x1="156" y1="637.95" x2="1280" y2="637.95" stroke="#c9c9b9" stroke-width="1.5"/><line x1="156" y1="650.13" x2="1280" y2="650.13" stroke="#c9c9b9" stroke-width="1.5"/><line x1="156" y1="662.32" x2="1280" y2="662.32" stroke="#c9c9b9" stroke-width="1.5"/><line x1="156" y1="674.50" x2="1280" y2="674.50" stroke="#c9c9b9" stroke-width="1.5"/><line x1="156" y1="686.68" x2="1280" y2="686.68" stroke="#b7b8a7" stroke-width="1.8"/><line x1="156" y1="698.86" x2="1280" y2="698.86" stroke="#c9c9b9" stroke-width="1.5"/><line x1="156" y1="711.04" x2="1280" y2="711.04" stroke="#c9c9b9" stroke-width="1.5"/><line x1="156" y1="723.23" x2="1280" y2="723.23" stroke="#c9c9b9" stroke-width="1.5"/><line x1="156" y1="735.41" x2="1280" y2="735.41" stroke="#c9c9b9" stroke-width="1.5"/><line x1="156" y1="747.59" x2="1280" y2="747.59" stroke="#c9c9b9" stroke-width="1.5"/><line x1="156" y1="759.77" x2="1280" y2="759.77" stroke="#c9c9b9" stroke-width="1.5"/><line x1="156" y1="771.95" x2="1280" y2="771.95" stroke="#c9c9b9" stroke-width="1.5"/><line x1="156" y1="784.14" x2="1280" y2="784.14" stroke="#c9c9b9" stroke-width="1.5"/><line x1="156" y1="796.32" x2="1280" y2="796.32" stroke="#c9c9b9" stroke-width="1.5"/><line x1="156" y1="808.50" x2="1280" y2="808.50" stroke="#c9c9b9" stroke-width="1.5"/><line x1="156" y1="820.68" x2="1280" y2="820.68" stroke="#c9c9b9" stroke-width="1.5"/><line x1="156" y1="832.86" x2="1280" y2="832.86" stroke="#c9c9b9" stroke-width="1.5"/><line x1="156" y1="845.05" x2="1280" y2="845.05" stroke="#c9c9b9" stroke-width="1.5"/><line x1="156" y1="857.23" x2="1280" y2="857.23" stroke="#c9c9b9" stroke-width="1.5"/><line x1="156" y1="869.41" x2="1280" y2="869.41" stroke="#c9c9b9" stroke-width="1.5"/><line x1="156" y1="881.59" x2="1280" y2="881.59" stroke="#c9c9b9" stroke-width="1.5"/><line x1="156" y1="893.77" x2="1280" y2="893.77" stroke="#c9c9b9" stroke-width="1.5"/><line x1="156" y1="905.96" x2="1280" y2="905.96" stroke="#c9c9b9" stroke-width="1.5"/><line x1="156" y1="918.14" x2="1280" y2="918.14" stroke="#c9c9b9" stroke-width="1.5"/><line x1="156" y1="930.32" x2="1280" y2="930.32" stroke="#b7b8a7" stroke-width="1.8"/>
<rect x="156" y="79" width="18.3" height="291.5" fill="#ffffff"/>
<rect x="454.50" y="358.70" width="536.10" height="413.50" fill="#cacaab" stroke="#7a0000" stroke-width="2.8"/><line x1="405.2" y1="383.60" x2="454.50" y2="383.60" stroke="#7a0000" stroke-width="2.8"/><text transform="translate(431.5,378.80) scale(1,1.08)" text-anchor="end" font-family="Liberation Sans" font-size="19.8" fill="#000">2</text><text x="466.8" y="390.50" font-family="Liberation Sans" font-size="19.8" fill="#000">PD0/RXD/PCINT16</text><line x1="405.2" y1="407.40" x2="454.50" y2="407.40" stroke="#7a0000" stroke-width="2.8"/><text transform="translate(431.5,402.60) scale(1,1.08)" text-anchor="end" font-family="Liberation Sans" font-size="19.8" fill="#000">3</text><text x="466.8" y="414.30" font-family="Liberation Sans" font-size="19.8" fill="#000">PD1/TXD/PCINT17</text><line x1="405.2" y1="431.40" x2="454.50" y2="431.40" stroke="#7a0000" stroke-width="2.8"/><text transform="translate(431.5,426.60) scale(1,1.08)" text-anchor="end" font-family="Liberation Sans" font-size="19.8" fill="#000">4</text><text x="466.8" y="438.30" font-family="Liberation Sans" font-size="19.8" fill="#000">PD2/INT0/PCINT18</text><line x1="405.2" y1="456.40" x2="454.50" y2="456.40" stroke="#7a0000" stroke-width="2.8"/><text transform="translate(431.5,451.60) scale(1,1.08)" text-anchor="end" font-family="Liberation Sans" font-size="19.8" fill="#000">5</text><text x="466.8" y="463.30" font-family="Liberation Sans" font-size="19.8" fill="#000">PD3/INT1/OC2B/PCINT19</text><line x1="405.2" y1="480.20" x2="454.50" y2="480.20" stroke="#7a0000" stroke-width="2.8"/><text transform="translate(431.5,475.40) scale(1,1.08)" text-anchor="end" font-family="Liberation Sans" font-size="19.8" fill="#000">6</text><text x="466.8" y="487.10" font-family="Liberation Sans" font-size="19.8" fill="#000">PD4/T0/XCK/PCINT20</text><line x1="405.2" y1="505.20" x2="454.50" y2="505.20" stroke="#7a0000" stroke-width="2.8"/><text transform="translate(431.5,500.40) scale(1,1.08)" text-anchor="end" font-family="Liberation Sans" font-size="19.8" fill="#000">11</text><text x="466.8" y="512.10" font-family="Liberation Sans" font-size="19.8" fill="#000">PD5/T1/OC0B/PCINT21</text><line x1="405.2" y1="528.60" x2="454.50" y2="528.60" stroke="#7a0000" stroke-width="2.8"/><text transform="translate(431.5,523.80) scale(1,1.08)" text-anchor="end" font-family="Liberation Sans" font-size="19.8" fill="#000">12</text><text x="466.8" y="535.50" font-family="Liberation Sans" font-size="19.8" fill="#000">PD6/AIN0/OC0A/PCINT22</text><line x1="405.2" y1="552.40" x2="454.50" y2="552.40" stroke="#7a0000" stroke-width="2.8"/><text transform="translate(431.5,547.60) scale(1,1.08)" text-anchor="end" font-family="Liberation Sans" font-size="19.8" fill="#000">13</text><text x="466.8" y="559.30" font-family="Liberation Sans" font-size="19.8" fill="#000">PD7/AIN1/PCINT23</text><line x1="405.2" y1="601.10" x2="454.50" y2="601.10" stroke="#7a0000" stroke-width="2.8"/><text transform="translate(431.5,596.30) scale(1,1.08)" text-anchor="end" font-family="Liberation Sans" font-size="19.8" fill="#000">21</text><text x="466.8" y="608.00" font-family="Liberation Sans" font-size="19.8" fill="#000">AREF</text><line x1="405.2" y1="626.40" x2="454.50" y2="626.40" stroke="#7a0000" stroke-width="2.8"/><text transform="translate(431.5,621.60) scale(1,1.08)" text-anchor="end" font-family="Liberation Sans" font-size="19.8" fill="#000">20</text><text x="466.8" y="633.30" font-family="Liberation Sans" font-size="19.8" fill="#000">AVCC</text><line x1="990.60" y1="383.60" x2="1039.8" y2="383.60" stroke="#7a0000" stroke-width="2.8"/><text transform="translate(1015.6,378.80) scale(1,1.08)" font-family="Liberation Sans" font-size="19.8" fill="#000">14</text><text x="979.2" y="390.50" text-anchor="end" font-family="Liberation Sans" font-size="19.8" fill="#000">PB0/ICP1/CLKO/PCINT0</text><line x1="990.60" y1="407.40" x2="1039.8" y2="407.40" stroke="#7a0000" stroke-width="2.8"/><text transform="translate(1015.6,402.60) scale(1,1.08)" font-family="Liberation Sans" font-size="19.8" fill="#000">15</text><text x="979.2" y="414.30" text-anchor="end" font-family="Liberation Sans" font-size="19.8" fill="#000">PB1/OC1A/PCINT1</text><line x1="990.60" y1="431.40" x2="1039.8" y2="431.40" stroke="#7a0000" stroke-width="2.8"/><text transform="translate(1015.6,426.60) scale(1,1.08)" font-family="Liberation Sans" font-size="19.8" fill="#000">16</text><text x="979.2" y="438.30" text-anchor="end" font-family="Liberation Sans" font-size="19.8" fill="#000">PB2/SS/OC1B/PCINT2</text><line x1="990.60" y1="456.40" x2="1039.8" y2="456.40" stroke="#7a0000" stroke-width="2.8"/><text transform="translate(1015.6,451.60) scale(1,1.08)" font-family="Liberation Sans" font-size="19.8" fill="#000">17</text><text x="979.2" y="463.30" text-anchor="end" font-family="Liberation Sans" font-size="19.8" fill="#000">PB3/MOSI/OC2A/PCINT3</text><line x1="990.60" y1="480.20" x2="1039.8" y2="480.20" stroke="#7a0000" stroke-width="2.8"/><text transform="translate(1015.6,475.40) scale(1,1.08)" font-family="Liberation Sans" font-size="19.8" fill="#000">18</text><text x="979.2" y="487.10" text-anchor="end" font-family="Liberation Sans" font-size="19.8" fill="#000">PB4/MISO/PCINT4</text><line x1="990.60" y1="505.20" x2="1039.8" y2="505.20" stroke="#7a0000" stroke-width="2.8"/><text transform="translate(1015.6,500.40) scale(1,1.08)" font-family="Liberation Sans" font-size="19.8" fill="#000">19</text><text x="979.2" y="512.10" text-anchor="end" font-family="Liberation Sans" font-size="19.8" fill="#000">PB5/SCK/PCINT5</text><line x1="990.60" y1="528.60" x2="1039.8" y2="528.60" stroke="#7a0000" stroke-width="2.8"/><text transform="translate(1015.6,523.80) scale(1,1.08)" font-family="Liberation Sans" font-size="19.8" fill="#000">9</text><text x="979.2" y="535.50" text-anchor="end" font-family="Liberation Sans" font-size="19.8" fill="#000">PB6/TOSC1/XTAL1/PCINT6</text><line x1="990.60" y1="552.40" x2="1039.8" y2="552.40" stroke="#7a0000" stroke-width="2.8"/><text transform="translate(1015.6,547.60) scale(1,1.08)" font-family="Liberation Sans" font-size="19.8" fill="#000">10</text><text x="979.2" y="559.30" text-anchor="end" font-family="Liberation Sans" font-size="19.8" fill="#000">PB7/TOSC2/XTAL2/PCINT7</text><line x1="990.60" y1="601.10" x2="1039.8" y2="601.10" stroke="#7a0000" stroke-width="2.8"/><text transform="translate(1015.6,596.30) scale(1,1.08)" font-family="Liberation Sans" font-size="19.8" fill="#000">23</text><text x="979.2" y="608.00" text-anchor="end" font-family="Liberation Sans" font-size="19.8" fill="#000">PC0/ADC0/PCINT8</text><line x1="990.60" y1="626.40" x2="1039.8" y2="626.40" stroke="#7a0000" stroke-width="2.8"/><text transform="translate(1015.6,621.60) scale(1,1.08)" font-family="Liberation Sans" font-size="19.8" fill="#000">24</text><text x="979.2" y="633.30" text-anchor="end" font-family="Liberation Sans" font-size="19.8" fill="#000">PC1/ADC1/PCINT9</text><line x1="990.60" y1="650.40" x2="1039.8" y2="650.40" stroke="#7a0000" stroke-width="2.8"/><text transform="translate(1015.6,645.60) scale(1,1.08)" font-family="Liberation Sans" font-size="19.8" fill="#000">25</text><text x="979.2" y="657.30" text-anchor="end" font-family="Liberation Sans" font-size="19.8" fill="#000">PC2/ADC2/PCINT10</text><line x1="990.60" y1="673.60" x2="1039.8" y2="673.60" stroke="#7a0000" stroke-width="2.8"/><text transform="translate(1015.6,668.80) scale(1,1.08)" font-family="Liberation Sans" font-size="19.8" fill="#000">26</text><text x="979.2" y="680.50" text-anchor="end" font-family="Liberation Sans" font-size="19.8" fill="#000">PC3/ADC3/PCINT11</text><line x1="990.60" y1="699.40" x2="1039.8" y2="699.40" stroke="#7a0000" stroke-width="2.8"/><text transform="translate(1015.6,694.60) scale(1,1.08)" font-family="Liberation Sans" font-size="19.8" fill="#000">27</text><text x="979.2" y="706.30" text-anchor="end" font-family="Liberation Sans" font-size="19.8" fill="#000">PC4/ADC4/SDA/PCINT12</text><line x1="990.60" y1="723.20" x2="1039.8" y2="723.20" stroke="#7a0000" stroke-width="2.8"/><text transform="translate(1015.6,718.40) scale(1,1.08)" font-family="Liberation Sans" font-size="19.8" fill="#000">28</text><text x="979.2" y="730.10" text-anchor="end" font-family="Liberation Sans" font-size="19.8" fill="#000">PC5/ADC5/SCL/PCINT13</text><line x1="990.60" y1="748.00" x2="1039.8" y2="748.00" stroke="#7a0000" stroke-width="2.8"/><text transform="translate(1015.6,743.20) scale(1,1.08)" font-family="Liberation Sans" font-size="19.8" fill="#000">1</text><text x="979.2" y="754.90" text-anchor="end" font-family="Liberation Sans" font-size="19.8" fill="#000">PC6/RESET/PCINT14</text><text transform="translate(453.6,349) scale(0.83,1)" x="0" y="0" font-family="Liberation Sans" font-size="33" fill="#000">U1</text><text x="453" y="792.8" font-family="Liberation Sans" font-size="19.8" fill="#000">ATMEGA48</text><text x="453" y="817" font-family="Liberation Sans" font-size="19.8" fill="#808080">&lt;TEXT&gt;</text><polyline points="1039.8,407.6 1160.60,407.6 1160.60,430" fill="none" stroke="#005000" stroke-width="2.6"/><line x1="1160.60" y1="429.5" x2="1160.60" y2="529" stroke="#7a0000" stroke-width="2.8"/><circle cx="1160.60" cy="480.00" r="28.5" fill="#000" stroke="#7a0000" stroke-width="2.8"/><line x1="1160.60" y1="451" x2="1160.60" y2="509" stroke="#7a0000" stroke-width="2.6"/><path d="M1146.5 473 L1176 473 L1160.60 491 Z" fill="none" stroke="#7a0000" stroke-width="2.6"/><line x1="1148" y1="491.5" x2="1175" y2="491.5" stroke="#7a0000" stroke-width="2.6"/><line x1="1160.60" y1="528.5" x2="1160.60" y2="613.5" stroke="#005000" stroke-width="2.6"/><line x1="1136" y1="613.5" x2="1187" y2="613.5" stroke="#005000" stroke-width="2.6"/><line x1="1148" y1="626.3" x2="1175" y2="626.3" stroke="#005000" stroke-width="2.6"/><line x1="1157.5" y1="638" x2="1165.5" y2="638" stroke="#005000" stroke-width="2.6"/><text transform="translate(1205.8,478.3) scale(0.82,1)" font-family="Liberation Sans" font-size="33" fill="#000">D1</text><text x="1205" y="504.5" font-family="Liberation Sans" font-size="19.8" fill="#000">LED-YE</text><text x="1205" y="527.5" font-family="Liberation Sans" font-size="19.8" fill="#808080">&lt;TEXT&gt;</text><line x1="234.5" y1="687" x2="259.5" y2="687" stroke="#3030c0" stroke-width="1.8"/><line x1="247" y1="674.5" x2="247" y2="699.5" stroke="#3030c0" stroke-width="1.8"/><circle cx="247" cy="687" r="8" fill="none" stroke="#101050" stroke-width="1.4"/><line x1="818" y1="419.40" x2="844.5" y2="419.40" stroke="#000" stroke-width="1.6"/><line x1="827.5" y1="736.00" x2="892.5" y2="736.00" stroke="#000" stroke-width="1.6"/>
</svg></div>
<div class="a" style="left:0;top:933px;width:1280px;height:25px;background:#e0e0e0"></div><div class="a" style="left:0;top:958px;width:1280px;height:2px;background:#303030"></div><svg style="left:0;top:920px" width="1280" height="40" viewBox="0 920 1280 40"><rect x="3" y="938" width="2" height="19" fill="#fafafa"/><line x1="5.5" y1="938" x2="5.5" y2="957" stroke="#b8b8b8"/><rect x="10" y="939" width="157" height="19" fill="#101010"/><rect x="11" y="940" width="38" height="17" fill="#dcdcdc"/><path d="M11.5 956.5V940.5H48.5" fill="none" stroke="#ffffff"/><path d="M48.5 940.5V956.5H11.5" fill="none" stroke="#a0a0a0"/><rect x="50" y="940" width="38" height="17" fill="#dcdcdc"/><path d="M50.5 956.5V940.5H87.5" fill="none" stroke="#ffffff"/><path d="M87.5 940.5V956.5H50.5" fill="none" stroke="#a0a0a0"/><rect x="89" y="940" width="38" height="17" fill="#dcdcdc"/><path d="M89.5 956.5V940.5H126.5" fill="none" stroke="#ffffff"/><path d="M126.5 940.5V956.5H89.5" fill="none" stroke="#a0a0a0"/><rect x="128" y="940" width="38" height="17" fill="#dcdcdc"/><path d="M128.5 956.5V940.5H165.5" fill="none" stroke="#ffffff"/><path d="M165.5 940.5V956.5H128.5" fill="none" stroke="#a0a0a0"/><path d="M27 942v11l7-5.5z" fill="#000"/><rect x="64" y="942" width="2.5" height="11" fill="#000"/><path d="M68 942v11l7-5.5z" fill="#000"/><rect x="104" y="942" width="2.8" height="11" fill="#000"/><rect x="109" y="942" width="2.8" height="11" fill="#000"/><rect x="142" y="943" width="10" height="10" fill="#000"/><rect x="172" y="938" width="98" height="19" fill="#e4e4e4"/><path d="M172.5 957V938.5H270" fill="none" stroke="#c0c0c0"/><path d="M269.5 938.5V956.5H172.5" fill="none" stroke="#fafafa"/><circle cx="182.5" cy="947.5" r="6.5" fill="#5a5a5a"/><circle cx="183" cy="943.5" r="1.2" fill="#fff"/><rect x="181.8" y="945.5" width="2.4" height="6" fill="#fff"/><text x="198" y="952" font-family="Liberation Sans" font-size="12" fill="#8a8a8a" letter-spacing="-0.8">No Messages</text><line x1="275.5" y1="935" x2="275.5" y2="958" stroke="#b8b8b8"/><line x1="276.5" y1="935" x2="276.5" y2="958" stroke="#fafafa"/><line x1="279.5" y1="937" x2="279.5" y2="957" stroke="#fafafa"/><line x1="280.5" y1="937" x2="280.5" y2="957" stroke="#b8b8b8"/><rect x="286" y="940" width="849" height="16" fill="#e4e4e4"/><path d="M286.5 956V940.5H1135" fill="none" stroke="#b0b0b0"/><path d="M1134.5 940.5V955.5H286.5" fill="none" stroke="#fafafa"/><text x="287.5" y="952" font-family="Liberation Sans" font-size="12" fill="#000" letter-spacing="-0.65">Atmel AVR Tiny15 Demo</text><line x1="1140.5" y1="935" x2="1140.5" y2="958" stroke="#b8b8b8"/><line x1="1141.5" y1="935" x2="1141.5" y2="958" stroke="#fafafa"/><line x1="1145.5" y1="937" x2="1145.5" y2="957" stroke="#fafafa"/><line x1="1146.5" y1="937" x2="1146.5" y2="957" stroke="#b8b8b8"/><rect x="1151" y="940" width="125" height="16" fill="#e4e4e4"/><path d="M1151.5 956V940.5H1276" fill="none" stroke="#b0b0b0"/><path d="M1275.5 940.5V955.5H1151.5" fill="none" stroke="#fafafa"/><text x="1160" y="952" font-family="Liberation Sans" font-size="12" fill="#000" letter-spacing="-0.9">+3100.0</text><text x="1208" y="952" font-family="Liberation Sans" font-size="12" fill="#000" letter-spacing="-0.9">+2500.0</text><text x="1265.5" y="952" font-family="Liberation Sans" font-size="12" fill="#1a1a80" letter-spacing="-0.5">th</text></svg>
</body></html>
